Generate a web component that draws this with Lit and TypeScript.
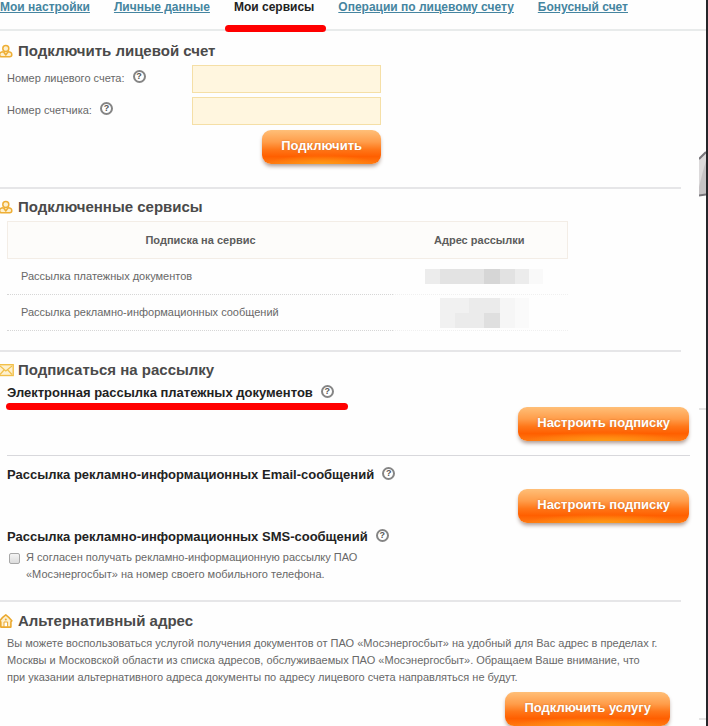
import { LitElement, html, css, svg } from "lit";
import { customElement, property } from "lit/decorators.js";

const personIcon = svg`
  <svg class="icon" viewBox="0 0 13 14" width="13" height="14" aria-hidden="true">
    <g fill="#fdf0cf" stroke="#eeae35" stroke-width="1.5" stroke-linejoin="round">
      <path d="M3.500 7.800C1.200 7.800-.4 9-.4 10.800c0 1.400 1 2 2.200 2h7.800c1.400 0 2.200-.6 2.200-2 0-1.800-1.600-3-3.800-3"/>
      <circle cx="5.800" cy="4.600" r="3"/>
      <path d="M3.500 7.800 5.800 11l2.200-3.200" fill="none"/>
    </g>
  </svg>`;

const mailIcon = svg`
  <svg class="icon" viewBox="0 0 14 14" width="14" height="14" aria-hidden="true">
    <rect x="-2" y="1.700" width="15.200" height="10.800" fill="#fdf0cf" stroke="#f2c04a" stroke-width="1.400"/>
    <path d="M0 3l5.800 5L12 3M0 11.500l4-4.500M12 11.500 7.800 7" fill="none" stroke="#f2c04a" stroke-width="1.200"/>
  </svg>`;

const homeIcon = svg`
  <svg class="icon" viewBox="0 0 13 14" width="13" height="14" aria-hidden="true">
    <path d="M-.2 6.800C1 5 3.500 2.500 5.800.9 8 2.500 10.400 5 11.800 6.800L10.900 8v5.100H.8V8z" fill="#fdf0cf" stroke="#eba92f" stroke-width="1.600" stroke-linejoin="round"/>
    <path d="M4 12.800V8h3.600v4.800z" fill="#fff" stroke="#eba92f" stroke-width="1"/>
    <circle cx="5.800" cy="5.400" r="1" fill="#eba92f"/>
  </svg>`;

@customElement("help-hint")
export class HelpHint extends LitElement {
  @property() about = "";

  static styles = css`
    :host { display: inline-flex; }
    .hint {
      box-sizing: border-box;
      width: 13px;
      height: 13px;
      padding: 0;
      border: 2px solid #858585;
      border-radius: 50%;
      background: #fff;
      color: #555;
      font: bold 9px/9px "Liberation Sans", sans-serif;
      text-align: center;
    }
  `;

  render() {
    return html`<button class="hint" type="button" aria-label=${this.about}>?</button>`;
  }
}

@customElement("app-root")
export class AppRoot extends LitElement {
  static styles = css`
    :host {
      display: block;
      box-sizing: border-box;
      min-height: 100vh;
      border-right: 2px solid #26262a;
      background: #fefefe;
      color: #686868;
      font: 11px/17px "Liberation Sans", Arial, sans-serif;
      overflow: hidden;
    }
    .tabs {
      display: flex;
      gap: 24px;
      height: 29px;
      border-bottom: 2px solid #e8ebeb;
      font-size: 12px;
      font-weight: bold;
      line-height: 15px;
      white-space: nowrap;
    }
    .tabs a { color: #4585a0; }
    .tabs .current {
      position: relative;
      color: #222;
      text-decoration: none;
    }
    .marked { position: relative; }
    .current::after,
    .marked::after {
      content: "";
      position: absolute;
      height: 7px;
      border-radius: 4px;
      background: #f00;
    }
    .current::after { left: -9px; right: -12px; top: 25px; }
    .marked::after { left: -1px; right: -35px; top: 19px; }
    .body { display: flex; }
    .content {
      flex: 1;
      min-width: 0;
      padding-right: 9px;
    }
    .rail {
      display: flex;
      flex-direction: column;
      width: 7px;
      padding-top: 120px;
    }
    .tick { height: 2px; background: #e4e4e4; }
    .tick.first { margin-top: 211px; }
    .tick.second { margin-top: 308px; }
    .section {
      margin-right: 9px;
      padding-top: 8px;
      border-bottom: 2px solid #e6e6e8;
    }
    .connect { padding-top: 10px; padding-bottom: 23px; }
    .services { padding-bottom: 19px; }
    .mailing { padding-bottom: 17px; }
    .address { padding-top: 9px; border-bottom: 0; }
    .wide {
      margin-right: -9px;
      padding-left: 7px;
    }
    .first-mail { padding-bottom: 14px; }
    .email {
      margin-left: 7px;
      padding-top: 10px;
      padding-left: 0;
      border-top: 1px solid #d8d8dc;
    }
    h2 {
      display: flex;
      align-items: center;
      margin: 0 0 4px;
      color: #4a4a4a;
      font-size: 15px;
      line-height: 20px;
    }
    .icon { flex: none; }
    .slot { display: flex; width: 18px; }
    h3 {
      display: flex;
      align-items: center;
      gap: 8px;
      margin: 0 0 5px;
      color: #222;
      font-size: 13px;
      line-height: 18px;
    }
    h3 help-hint, .label help-hint { margin-bottom: 4px; }
    .fields {
      display: grid;
      grid-template-columns: 185px 189px;
      gap: 4px 0;
      margin: 0 0 5px 7px;
    }
    .label {
      display: flex;
      align-items: center;
      gap: 8px;
      height: 26px;
    }
    .field {
      box-sizing: border-box;
      width: 100%;
      height: 28px;
      padding: 0 6px;
      border: 1px solid #f5dfa6;
      background: #fff6df;
      font: inherit;
    }
    .actions { display: flex; justify-content: flex-end; }
    .connect .actions { width: 381px; }
    .address .actions { margin-right: 11px; }
    .mailing .actions { margin-right: 1px; margin-bottom: 5px; }
    .first-mail .actions { margin-bottom: 0; }
    .action {
      height: 34px;
      padding: 0 19px 2px;
      border: 0;
      border-radius: 9px;
      background:
        radial-gradient(ellipse 46% 9px at 50% 100%, #ff9a14, transparent),
        linear-gradient(#ffbf78, #ff9d4a 35%, #ff7618 58%, #ff5f00 78%, #ff7a12);
      box-shadow: 0 3px 4px -1px #a9938a;
      color: #fff;
      font: bold 13px/18px "Liberation Sans", Arial, sans-serif;
      text-shadow: 0 0 2px #d0702a;
      white-space: nowrap;
    }
    table {
      width: 561px;
      margin-left: 7px;
      border-collapse: separate;
      border-spacing: 0;
      table-layout: fixed;
    }
    .col-name { width: 386px; }
    th {
      height: 38px;
      box-sizing: border-box;
      padding: 0;
      border: solid #f3ede6;
      border-width: 1px 0;
      background: #fdfcfa;
      color: #5c5c5c;
    }
    th:first-child { border-left-width: 1px; }
    th:last-child {
      border-right-width: 1px;
      padding-left: 41px;
      text-align: left;
    }
    td {
      height: 36px;
      box-sizing: border-box;
      padding: 0 0 0 14px;
      border-bottom: 1px dotted #d6d6d6;
    }
    td:last-child { padding: 0; border-bottom-color: #f0f0f0; }
    .masked { display: block; margin-left: 24px; }
    .consent {
      display: flex;
      gap: 6px;
      margin-top: -2px;
    }
    .consent input {
      appearance: none;
      box-sizing: border-box;
      flex: none;
      width: 11px;
      height: 11px;
      margin: 4px 0 0 2px;
      border: 1px solid #a8a8a8;
      border-radius: 2px;
      background: linear-gradient(#f4f4f4, #dcdcdc);
    }
    .consent label { max-width: 350px; }
    .address p { margin: 0 0 6px 7px; }
  `;

  private heading(icon: unknown, text: string) {
    return html`<h2><span class="slot">${icon}</span>${text}</h2>`;
  }

  render() {
    return html`
      <nav class="tabs">
        <a href="#settings">Мои настройки</a>
        <a href="#personal">Личные данные</a>
        <a class="current" href="#services" aria-current="page">Мои сервисы</a>
        <a href="#operations">Операции по лицевому счету</a>
        <a href="#bonus">Бонусный счет</a>
      </nav>
      <div class="body">
        <main class="content">
          <section class="section connect">
            ${this.heading(personIcon, "Подключить лицевой счет")}
            <div class="fields">
              <div class="label">
                <label for="account">Номер лицевого счета:</label>
                <help-hint about="Справка: номер лицевого счета"></help-hint>
              </div>
              <input class="field" id="account" type="text" />
              <div class="label">
                <label for="meter">Номер счетчика:</label>
                <help-hint about="Справка: номер счетчика"></help-hint>
              </div>
              <input class="field" id="meter" type="text" />
            </div>
            <div class="actions"><button class="action" type="button">Подключить</button></div>
          </section>

          <section class="section services">
            ${this.heading(personIcon, "Подключенные сервисы")}
            <table>
              <colgroup><col class="col-name" /><col /></colgroup>
              <thead>
                <tr><th scope="col">Подписка на сервис</th><th scope="col">Адрес рассылки</th></tr>
              </thead>
              <tbody>
                <tr>
                  <td>Рассылка платежных документов</td>
                  <td>
                    <svg class="masked" width="127" height="15" aria-hidden="true">
                      <path fill="#ececec" d="M8 0h104v15H8z" />
                      <path fill="#e3e3e3" d="M23 0h44v15H23z" />
                      <path fill="#d6d6d6" d="M67 0h16v15H67z" />
                      <path fill="#e2e2e2" d="M83 0h15v15H83z" />
                      <path fill="#f9f9f9" d="M112 0h14v15h-14z" />
                    </svg>
                  </td>
                </tr>
                <tr>
                  <td>Рассылка рекламно-информационных сообщений</td>
                  <td>
                    <svg class="masked" width="127" height="30" aria-hidden="true">
                      <path fill="#f1f1f1" d="M23 0h60v30H23z" />
                      <path fill="#ebebeb" d="M52 0h31v15H52zM38 15h29v15H38z" />
                      <path fill="#dfdfdf" d="M67 15h16v15H67z" />
                      <path fill="#f6f6f6" d="M83 0h15v30H83z" />
                      <path fill="#fafafa" d="M98 0h14v30H98z" />
                    </svg>
                  </td>
                </tr>
              </tbody>
            </table>
          </section>

          <section class="section mailing">
            ${this.heading(mailIcon, "Подписаться на рассылку")}
            <div class="wide first-mail">
              <h3>
                <span class="marked">Электронная рассылка платежных документов</span>
                <help-hint about="Справка: платежные документы"></help-hint>
              </h3>
              <div class="actions"><button class="action" type="button">Настроить подписку</button></div>
            </div>
            <div class="wide email">
              <h3>
                <span>Рассылка рекламно-информационных Email-сообщений</span>
                <help-hint about="Справка: Email-сообщения"></help-hint>
              </h3>
              <div class="actions"><button class="action" type="button">Настроить подписку</button></div>
              <h3>
                <span>Рассылка рекламно-информационных SMS-сообщений</span>
                <help-hint about="Справка: SMS-сообщения"></help-hint>
              </h3>
              <div class="consent">
                <input id="consent" type="checkbox" />
                <label for="consent">Я согласен получать рекламно-информационную рассылку ПАО «Мосэнергосбыт» на номер своего мобильного телефона.</label>
              </div>
            </div>
          </section>

          <section class="section address">
            ${this.heading(homeIcon, "Альтернативный адрес")}
            <p>
              Вы можете воспользоваться услугой получения документов от ПАО «Мосэнергосбыт» на удобный для Вас адрес в пределах г.<br />
              Москвы и Московской области из списка адресов, обслуживаемых ПАО «Мосэнергосбыт». Обращаем Ваше внимание, что<br />
              при указании альтернативного адреса документы по адресу лицевого счета направляться не будут.
            </p>
            <div class="actions"><button class="action" type="button">Подключить услугу</button></div>
          </section>
        </main>
        <aside class="rail" aria-hidden="true">
          <svg width="7" height="46">
            <path fill="#dcdadb" d="M0 8 7 1v43H0z" />
            <path fill="#c6c3c5" d="M4 20 7 10v34H0v-8z" />
            <path stroke="#77757a" stroke-width="2" fill="none" d="M0 8 7 1M0 44.500l7-1" />
          </svg>
          <div class="tick first"></div>
          <div class="tick second"></div>
        </aside>
      </div>
    `;
  }
}
